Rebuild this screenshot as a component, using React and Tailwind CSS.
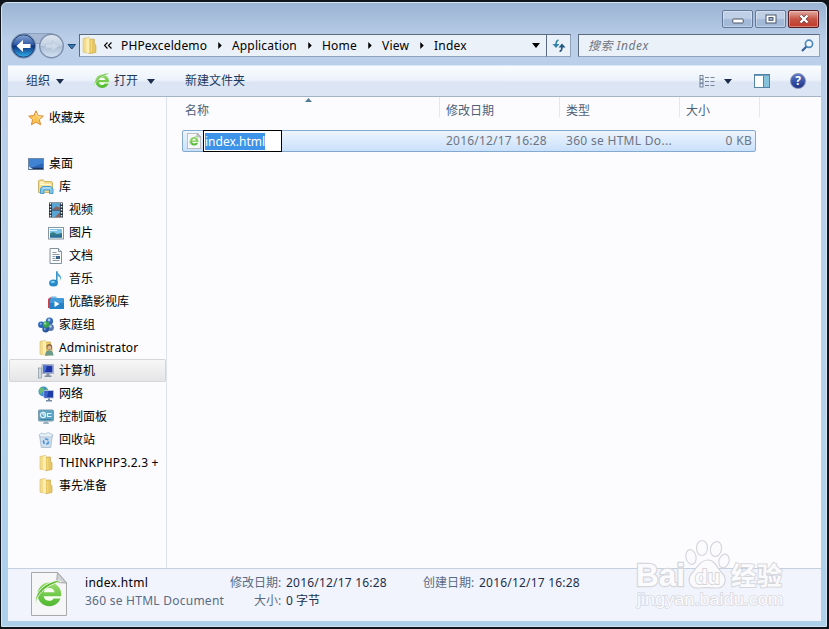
import { useId } from 'react'

const CRUMBS = [
  { name: 'PHPexceldemo', box: 'w-[111px]', track: 'tracking-[0.15px]' },
  { name: 'Application', box: 'w-[90px]', track: 'tracking-[0.15px]' },
  { name: 'Home', box: 'w-[60px]', track: 'tracking-[0.2px]' },
  { name: 'View', box: 'w-[52px]', track: 'tracking-[0.2px]' },
  { name: 'Index', box: 'w-[60px]', track: 'tracking-[0.2px]', last: true },
]

const TREE = [
  { name: '桌面', icon: DesktopIcon, pad: 'pl-[19px]' },
  { name: '库', icon: LibraryIcon, pad: 'pl-[29px]' },
  { name: '视频', icon: VideoIcon, pad: 'pl-[39px]' },
  { name: '图片', icon: PictureIcon, pad: 'pl-[39px]' },
  { name: '文档', icon: DocumentIcon, pad: 'pl-[39px]' },
  { name: '音乐', icon: MusicIcon, pad: 'pl-[39px]' },
  { name: '优酷影视库', icon: YoukuIcon, pad: 'pl-[39px]' },
  { name: '家庭组', icon: HomegroupIcon, pad: 'pl-[29px]' },
  { name: 'Administrator', icon: UserIcon, pad: 'pl-[29px]', track: 'tracking-[0.1px]' },
  { name: '计算机', icon: ComputerIcon, pad: 'pl-[29px]', active: true },
  { name: '网络', icon: NetworkIcon, pad: 'pl-[29px]' },
  { name: '控制面板', icon: ControlIcon, pad: 'pl-[29px]' },
  { name: '回收站', icon: RecycleIcon, pad: 'pl-[29px]' },
  { name: 'THINKPHP3.2.3 +', icon: FolderIcon, pad: 'pl-[29px]', track: 'tracking-[0.2px]' },
  { name: '事先准备', icon: FolderIcon, pad: 'pl-[29px]' },
]

function Icon({ children, className = 'h-4 w-4' }) {
  return <svg viewBox="0 0 16 16" className={`shrink-0 ${className}`}>{children}</svg>
}

function StarIcon() {
  return (
    <Icon>
      <path d="M8 .8l2.100 4.800 5.200.5-3.900 3.500 1.200 5.200L8 12.100l-4.600 2.700 1.200-5.200L.7 6.100l5.200-.5z" fill="#fbc552" stroke="#dc8a33" />
      <path d="M8 3l1.300 3.500 3.600.4-2.700 2.400M5 8.500l1.500-1.500" fill="none" stroke="#ffe9a6" />
    </Icon>
  )
}

function DesktopIcon() {
  return (
    <Icon>
      <rect x=".5" y="2.500" width="15" height="11" fill="#2c66b8" stroke="#6d87a5" />
      <path d="M1 3h14v4L5 11H1z" fill="#3f83d2" />
      <path d="M1 12.500h14" stroke="#1e3459" strokeWidth="1.500" />
      <path d="M1 10.500l4 2.500H1z" fill="#cfe9f5" />
    </Icon>
  )
}

function LibraryIcon() {
  return (
    <Icon>
      <path d="M.5 13.500V2l1-1h4l1 1.500h6.500l1.500 1v10z" fill="#f2dc8b" stroke="#cdb267" />
      <path d="M2 3.500h4M2 5.500h11" stroke="#fff7cf" strokeWidth="1.500" />
      <path d="M2.500 14.500v-5l2-2h8l2.500 2v5h-3.500v-3.500h-5.500v3.500z" fill="#80c5e8" stroke="#4a9cca" />
      <path d="M4.500 9h8" stroke="#c8ebfa" />
    </Icon>
  )
}

function VideoIcon() {
  return (
    <Icon>
      <rect x="1" y=".5" width="14" height="15" fill="#26323d" />
      <rect x="4" y="1" width="8" height="6.500" fill="#5ba5d5" />
      <rect x="4" y="8.500" width="8" height="6.500" fill="#5ba5d5" />
      <path d="M4 7.500l4-3 4 1v2zM7 15l5-5v5z" fill="#8d625b" />
      <path d="M2.500 1v14M13.500 1v14" stroke="#e5edf2" strokeWidth="1.500" strokeDasharray="1.500 1.500" />
    </Icon>
  )
}

function PictureIcon() {
  return (
    <Icon>
      <rect x=".5" y="2.500" width="15" height="11.500" fill="#fff" stroke="#8496a2" />
      <rect x="2" y="4" width="12" height="8.500" fill="#7bc4e8" />
      <path d="M2 8.500l3-1.500 4 2 5-1v4.500H2z" fill="#397d84" />
      <path d="M2 10.500l12-.5v2.500H2z" fill="#2a6d9a" />
      <path d="M2 5.500h7" stroke="#d8f1fa" />
    </Icon>
  )
}

function DocumentIcon() {
  return (
    <Icon>
      <path d="M2 .5h8.500l3 3v12H2z" fill="#fbfcfd" stroke="#82909b" />
      <path d="M10.500.5v3h3" fill="#dbe3e9" stroke="#82909b" />
      <path d="M4.500 4.500h4M4.500 6.500h7M4.500 8.500h3M4.500 10.500h3M4.500 12.500h7" stroke="#8e9ca7" />
      <rect x="8" y="8" width="4" height="3" fill="#39648c" />
    </Icon>
  )
}

function MusicIcon() {
  return (
    <Icon>
      <path d="M8.800 12V.3" fill="none" stroke="#3b93c4" strokeWidth="1.600" />
      <path d="M9 .3c.7 3 6.300 4.500 3.500 9.700.5-3-1-4.500-3.500-5z" fill="#4fa8d4" />
      <ellipse cx="5.500" cy="12" rx="4.400" ry="3.500" fill="#2489c8" />
      <ellipse cx="4.800" cy="11" rx="2.200" ry="1.200" fill="#7cc8eb" />
    </Icon>
  )
}

function YoukuIcon() {
  return (
    <Icon>
      <path d="M0 5l3-2v11H0z" fill="#c5444f" />
      <path d="M3 2.500h5l1 1.500h6.500v3H3z" fill="#6fb9e8" />
      <rect x="1.500" y="4.500" width="14.500" height="10.500" rx=".5" fill="#2482c9" />
      <path d="M2 5h13.500v4H2z" fill="#4299d9" />
      <path d="M6.500 7l5 3-5 3z" fill="#fff" />
    </Icon>
  )
}

function HomegroupIcon() {
  return (
    <Icon>
      <circle cx="11.500" cy="4.200" r="3.600" fill="#3568b8" />
      <circle cx="12.300" cy="10.500" r="3.600" fill="#5778ad" />
      <circle cx="3.300" cy="7.800" r="3.200" fill="#2b63c0" />
      <circle cx="7.700" cy="12" r="3.400" fill="#2c59a5" />
      <circle cx="8" cy="7.500" r="3.300" fill="#3ca051" />
      <circle cx="7.200" cy="6.500" r="1.300" fill="#8ed69a" />
      <circle cx="11" cy="3" r="1.400" fill="#a8cff2" />
      <circle cx="12.500" cy="9.500" r="1.200" fill="#b4cbe5" />
      <circle cx="2.700" cy="6.800" r="1" fill="#8fb9ee" />
      <circle cx="6.800" cy="12" r="1" fill="#83aadd" />
    </Icon>
  )
}

function FolderShape() {
  return (
    <>
      <path d="M2 1.500l5.500-1v14.500l-5.500-.8z" fill="#f3dd8a" stroke="#dcc06a" strokeWidth=".7" />
      <path d="M7.500 2h5v4.500l1.500 1v7l-6.500 1.200z" fill="#e6c763" stroke="#cfab4d" strokeWidth=".7" />
      <path d="M5 1.500l3-.8v14.600l-3-.6z" fill="#fbeeb0" />
      <path d="M9.800 3v11.500" stroke="#f4dc86" />
    </>
  )
}

function FolderIcon({ className }) {
  return <Icon className={className}><FolderShape /></Icon>
}

function UserIcon() {
  return (
    <Icon>
      <FolderShape />
      <circle cx="11.300" cy="7" r="2.900" fill="#8c6b4c" />
      <circle cx="11.300" cy="7.800" r="2" fill="#e0b98f" />
      <path d="M7 15.500c0-7 8.500-7 8.500 0z" fill="#6c9a8c" />
    </Icon>
  )
}

function ComputerIcon() {
  return (
    <Icon>
      <rect x=".5" y="5" width="3" height="10" fill="#d1d9df" stroke="#8a97a2" strokeWidth=".7" />
      <path d="M4 1.500h11.500v9H4z" fill="#dbe3ee" stroke="#94a2b7" strokeWidth=".8" />
      <path d="M5 2.500h9.500v7H5z" fill="#1c37a5" />
      <path d="M5 2.500h4l-2 7H5z" fill="#4b70d2" />
      <path d="M8.500 10.500h3v2h2v1.500h-7v-1.500h2z" fill="#8390a2" />
    </Icon>
  )
}

function NetworkIcon() {
  return (
    <Icon>
      <circle cx="5.500" cy="5.500" r="5" fill="#3e91cf" />
      <path d="M2 2.500c3-2 4-1 4 1s-3 3-2 5c-3-1-3.500-4-2-6zM8 2l2 2-2 2z" fill="#67bb70" />
      <path d="M6 4.500h9.500v7.500H6z" fill="#1e3da9" stroke="#b7c7da" strokeWidth=".9" />
      <path d="M6.500 5h4l-1.500 6.500H6.500z" fill="#3c62cc" />
      <path d="M10 12.500h2v1.500h2v1.500H8V14h2z" fill="#738aa4" />
    </Icon>
  )
}

function ControlIcon() {
  return (
    <Icon>
      <rect x=".5" y="1" width="15" height="11" rx="1" fill="#5ba5c6" stroke="#7c9cac" />
      <circle cx="5" cy="6" r="2.600" fill="none" stroke="#e1f4fb" strokeWidth="1.200" />
      <path d="M5 6V3.500M5 6h2.500M9.500 4.500h4M9.500 7.500h4M9.500 4v4" stroke="#e1f4fb" strokeWidth="1.100" />
      <path d="M6 12.500h4l1 2.500H5z" fill="#9db2bf" />
      <path d="M2.500 10.500h11" stroke="#3b7e9f" />
    </Icon>
  )
}

function RecycleIcon() {
  return (
    <Icon>
      <path d="M1.500 3l1.800 12.500h9.400l1.800-12.500z" fill="#cfdfee" stroke="#a4b8cb" strokeWidth=".8" />
      <path d="M.8 3.500l2.200-2.500 4 1 3-1.500 5.200 2.500-2.200 2H3z" fill="#e5eff7" stroke="#a4b8cb" strokeWidth=".7" />
      <circle cx="8" cy="9.500" r="2.500" fill="none" stroke="#4d91d6" strokeWidth="1.700" strokeDasharray="3.700 1.500" />
    </Icon>
  )
}

// Green browser "e" with the swoosh around it
function BrowserIcon({ className }) {
  const id = useId()
  return (
    <Icon className={className}>
      <defs>
        <linearGradient id={id} x1="0" y1="0" x2="0" y2="1">
          <stop offset="0" stopColor="#9bdc6c" />
          <stop offset="1" stopColor="#4db82f" />
        </linearGradient>
      </defs>
      <circle cx="8.200" cy="8.200" r="6.800" fill={`url(#${id})`} />
      <path d="M5 7c.3-1.500 1.400-2.400 3.100-2.400S11 5.500 11.200 7zM5 9.300h10v1.300h-4.300c-.6.900-1.400 1.300-2.500 1.300C6.400 11.900 5.200 11 5 9.300z" fill="#f7fff2" />
      <path d="M1.800 15.200C-1.500 11.500 4 3.500 15 .8c-1.500-.7-3-.5-4.500 0C3 3.300-.9 9.500.7 13.500c.2.600.6 1.200 1.100 1.700z" fill="#5fb936" stroke="#f4fdf0" strokeWidth=".5" />
    </Icon>
  )
}

function FileIcon({ className, e }) {
  return (
    <span className={`relative flex shrink-0 items-center justify-center ${className}`}>
      <svg viewBox="0 0 36 44" preserveAspectRatio="none" className="absolute inset-0 h-full w-full">
        <path d="M.5.5h26l9 10v33H.5z" fill="#f6f6f8" stroke="#a8a8ab" vectorEffect="non-scaling-stroke" />
        <path d="M26.500.5l-1 10 10 .5z" fill="#cfd0d4" stroke="#a8a8ab" vectorEffect="non-scaling-stroke" />
      </svg>
      <BrowserIcon className={`relative ${e}`} />
    </span>
  )
}

function Down({ className = 'text-[#1d2f4a]' }) {
  return (
    <svg viewBox="0 0 8 5" className={`h-[5px] w-2 shrink-0 ${className}`}>
      <path d="M0 0h8L4 5z" fill="currentColor" />
    </svg>
  )
}

function NavButtons() {
  return (
    <svg viewBox="0 0 70 28" className="h-7 w-[70px] shrink-0">
      <defs>
        <linearGradient id="back" x1="0" y1="0" x2="0" y2="1">
          <stop offset="0" stopColor="#8aa5d2" />
          <stop offset=".45" stopColor="#2c58a5" />
          <stop offset=".5" stopColor="#0b3180" />
          <stop offset="1" stopColor="#36b0ec" />
        </linearGradient>
        <linearGradient id="forward" x1="0" y1="0" x2="0" y2="1">
          <stop offset="0" stopColor="#dfe7f1" />
          <stop offset=".48" stopColor="#c3d0e0" />
          <stop offset=".52" stopColor="#aebfd5" />
          <stop offset="1" stopColor="#d5e3f3" />
        </linearGradient>
      </defs>
      <path d="M14 1.500h28v10H24z" fill="#a5b9d5" stroke="#8b9fbe" />
      <circle cx="13.500" cy="14" r="12.200" fill="#c3d3e9" stroke="#7187a9" />
      <circle cx="13.500" cy="14" r="11.200" fill="url(#back)" stroke="#1b3a74" />
      <circle cx="41.500" cy="14" r="11.800" fill="url(#forward)" stroke="#7c8fac" strokeWidth="1.400" />
      <path d="M6.500 14l6.500-6v4h7.500v4H13v4z" fill="#fff" />
      <path d="M48.500 14L42 8.500v3.500h-6.500v4H42v3.500z" fill="#cdd9e8" stroke="#b7c5d9" strokeWidth=".7" />
      <path d="M58 12.500h7.500l-3.700 4.500z" fill="#3a78b0" stroke="#1e4a78" />
    </svg>
  )
}

function CaptionButtons() {
  const base = 'flex h-[18px] items-center justify-center rounded-[2px] border shadow-[inset_0_0_0_1px_rgba(255,255,255,0.35)]'
  const pale = 'border-[#64799a] bg-linear-to-b from-[#bfcfe5] from-45% to-[#a3b9d8] to-55%'
  return (
    <div className="flex pt-[7px] pr-[7px]">
      <div className={`${base} ${pale} mr-[2px] w-[31px]`}>
        <svg viewBox="0 0 12 6" className="mt-[4px] h-[6px] w-3"><rect x=".8" y="1" width="10.400" height="4" rx=".5" fill="#fff" stroke="#4b566b" /></svg>
      </div>
      <div className={`${base} ${pale} mr-[2px] w-[31px]`}>
        <svg viewBox="0 0 12 10" className="h-[10px] w-3">
          <rect x="1" y="1" width="10" height="8" fill="#fff" stroke="#4b566b" />
          <rect x="4" y="3.500" width="4" height="2.800" fill="#9fb6d4" stroke="#4b566b" />
        </svg>
      </div>
      <div className={`${base} w-[31px] border-[#5b1b22] bg-linear-to-b from-[#dd9c92] from-10% via-[#c75445] via-50% to-[#bf3a29]`}>
        <svg viewBox="0 0 12 10" className="h-[10px] w-3">
          <path d="M2.500 1.500l7 7M9.500 1.500l-7 7" stroke="#5b3940" strokeWidth="3.800" />
          <path d="M2.500 1.500l7 7M9.500 1.500l-7 7" stroke="#fff" strokeWidth="2.400" />
        </svg>
      </div>
    </div>
  )
}

function AddressBar() {
  const box = 'flex h-[23px] items-center border border-[#8fa1bb] border-t-[#5b6a80] border-l-[#5b6a80] bg-[#ebf1f9]'
  return (
    <div className="flex h-[31px] items-start pl-[8px]">
      <div className="-mt-[2px]"><NavButtons /></div>
      <div className={`${box} -ml-[1px] w-[468px] pl-[1px] text-black`}>
        <FolderIcon className="h-[17px] w-[17px]" />
        <svg viewBox="0 0 8 7" className="mr-[9px] ml-[6px] h-[7px] w-2">
          <path d="M3.500.5l-3 3 3 3M7.500.5l-3 3 3 3" fill="none" stroke="#000" strokeWidth="1.200" />
        </svg>
        {CRUMBS.map((c) => (
          <div key={c.name} className={`flex shrink-0 items-center justify-between pr-[10px] ${c.box}`}>
            <span className={`whitespace-nowrap ${c.track}`}>{c.name}</span>
            {!c.last && <svg viewBox="0 0 4 8" className="h-[7px] w-1"><path d="M0 0v8l4-4z" /></svg>}
          </div>
        ))}
        <span className="ml-auto pr-[6px]"><Down className="h-1 text-black" /></span>
      </div>
      <div className={`${box} -ml-px w-[25px] justify-center`}>
        <svg viewBox="0 0 14 13" className="h-[13px] w-[14px]">
          <path d="M6.500 1C4.500 1.500 4 3 4 6" fill="none" stroke="#3483a8" strokeWidth="1.700" />
          <path d="M.5 5h7L4 9z" fill="#3483a8" />
          <path d="M7.500 12.500c2-.5 2.500-2 2.500-5" fill="none" stroke="#24577f" strokeWidth="1.700" />
          <path d="M6.500 8.500h7L10 4.500z" fill="#24577f" />
        </svg>
      </div>
      <div className={`${box} ml-[7px] w-[242px] justify-between pr-[5px] pl-[9px]`}>
        <span className="tracking-[0.5px] text-[#6e7681] italic">搜索 Index</span>
        <svg viewBox="0 0 13 13" className="h-[13px] w-[13px]">
          <path d="M6 7L1 12" stroke="#355f96" strokeWidth="2.200" />
          <circle cx="8" cy="4.800" r="3.600" fill="#f3f8fc" stroke="#4d8abb" strokeWidth="1.700" />
        </svg>
      </div>
    </div>
  )
}

function Toolbar() {
  return (
    <div className="flex h-8 shrink-0 items-center border-t border-b border-t-[#d9e8f5] border-b-[#a6b4c8] bg-linear-to-b from-[#fafdff] from-0% via-[#edf3fb] via-45% to-[#dce5f4] to-55% pl-[18px] text-[#1e395b]">
      <span className="mr-[6px]">组织</span>
      <Down />
      <BrowserIcon className="mr-[4px] ml-[30px] h-4 w-4" />
      <span className="mr-[9px]">打开</span>
      <Down />
      <span className="ml-[30px]">新建文件夹</span>
      <div className="ml-auto flex items-center pr-[15px]">
        <svg viewBox="0 0 16 13" className="h-[13px] w-4">
          {[0.5, 4.5, 8.5].map((y) => (
            <g key={y} fill="none" stroke="#75859b">
              <rect x="1" y={y} width="3" height="3.500" />
              <path d={`M6 ${y + 2}h4M11.500 ${y + 2}h4`} />
            </g>
          ))}
        </svg>
        <span className="ml-[9px] flex"><Down /></span>
        <svg viewBox="0 0 16 14" className="ml-[22px] h-[14px] w-4">
          <rect x=".5" y=".5" width="15" height="13" fill="#fff" stroke="#5384a5" />
          <path d="M1 1.500h14" stroke="#719dbc" />
          <rect x="10" y="2" width="5" height="11" fill="#85c3da" />
          <path d="M9.500 2v11" stroke="#5384a5" />
        </svg>
        <span className="ml-5 flex h-4 w-4 items-center justify-center rounded-full border border-[#8590b4] bg-linear-to-b from-[#5b78c8] to-[#1d3287] text-[12px] leading-none font-bold text-white">?</span>
      </div>
    </div>
  )
}

function TreeItem({ icon: Glyph, name, pad, active, track = '' }) {
  return (
    <li className={`flex h-[23px] items-center gap-[5px] whitespace-nowrap ${pad} ${active ? 'rounded-[2px] bg-linear-to-b from-[#f8f8f8] to-[#e4e4e6] shadow-[inset_0_0_0_1px_#d6d6d8]' : ''}`}>
      <Glyph />
      <span className={track}>{name}</span>
    </li>
  )
}

function Sidebar() {
  return (
    <ul className="w-[159px] shrink-0 border-r border-[#dce3ee] pt-[9px] pl-px text-black">
      <TreeItem icon={StarIcon} name="收藏夹" pad="pl-[19px]" />
      <li className="h-[23px]" />
      {TREE.map((item) => <TreeItem key={item.name} {...item} />)}
    </ul>
  )
}

function FileList() {
  const head = 'flex h-5 items-center border-r border-[#e2e8f0] pt-[8px]'
  return (
    <div className="flex-1 pl-[15px]">
      <div className="relative flex h-[22px] text-[#4c607a]">
        <div className={`${head} w-[258px] pl-[3px]`}>名称</div>
        <div className={`${head} w-[120px] pl-[6px]`}>修改日期</div>
        <div className={`${head} w-[120px] pl-[6px]`}>类型</div>
        <div className={`${head} w-[80px] pl-[6px]`}>大小</div>
        <svg viewBox="0 0 7 4" className="absolute top-[1px] left-[123px] h-1 w-[7px]"><path d="M0 4L3.500 0 7 4z" fill="#527b93" /></svg>
      </div>
      <div className="mt-[11px] flex h-[22px] w-[574px] items-center rounded-[2px] border border-[#84a9cf] bg-linear-to-b from-[#eef5fe] to-[#c9e0fb] text-[#6d7584]">
        <div className="flex w-[257px] items-center pl-[4px]">
          <FileIcon className="h-4 w-[14px]" e="h-[10px] w-[10px]" />
          <div className="ml-[2px] flex h-[22px] w-[79px] items-center border border-black bg-white pl-px">
            <span className="bg-[#3c93e8] leading-[17px] text-white">index.html</span>
          </div>
        </div>
        <span className="w-[120px] pl-[6px] tracking-[0.2px]">2016/12/17 16:28</span>
        <span className="w-[120px] pl-[6px] tracking-[0.3px]">360 se HTML Do...</span>
        <span className="flex-1 pr-[3px] text-right tracking-[0.3px]">0 KB</span>
      </div>
    </div>
  )
}

function Details() {
  return (
    <div className="flex h-[53px] shrink-0 border-t border-[#c3d0df] bg-[#f1f4fc] pt-[4px] pl-[23px] leading-[19px] text-[#5a6b84]">
      <FileIcon className="-mt-px h-[44px] w-[36px]" e="h-[28px] w-[28px]" />
      <div className="ml-[18px] w-[145px] whitespace-nowrap">
        <div className="tracking-[0.3px] text-black">index.html</div>
        <div className="-mt-px tracking-[0.25px]">360 se HTML Document</div>
      </div>
      <div className="w-[193px] whitespace-nowrap">
        <div className="flex"><span className="w-[56px]">修改日期:</span><span className="tracking-[0.2px] text-[#1e2f4d]">2016/12/17 16:28</span></div>
        <div className="-mt-px flex"><span className="w-[56px] pl-6">大小:</span><span className="text-[#1e2f4d]">0 字节</span></div>
      </div>
      <div className="flex whitespace-nowrap"><span className="w-[56px]">创建日期:</span><span className="tracking-[0.2px] text-[#1e2f4d]">2016/12/17 16:28</span></div>
    </div>
  )
}

function Watermark() {
  return (
    <svg viewBox="0 0 160 80" className="pointer-events-none absolute top-[536px] left-[630px] h-20 w-40" fill="#fbfbfe" stroke="#d6d7dc" strokeWidth="1.200">
      <ellipse cx="61" cy="21" rx="5" ry="7.500" transform="rotate(-12 61 21)" />
      <ellipse cx="72" cy="12" rx="5.500" ry="7.500" />
      <ellipse cx="86" cy="13" rx="5.500" ry="7.500" transform="rotate(12 86 13)" />
      <ellipse cx="94" cy="25" rx="5" ry="7" transform="rotate(18 94 25)" />
      <path d="M78 24c7 0 9 8 14 13 6 6 3 15-5 15-5 0-12-1-18 0-9 1-13-8-7-15 5-5 8-13 16-13z" />
      <g fontFamily="Liberation Sans, Noto Sans CJK SC, sans-serif" fontWeight="bold" paintOrder="stroke">
        <text x="6" y="50" fontSize="32" strokeWidth="2.500" textLength="49" lengthAdjust="spacingAndGlyphs">Bai</text>
        <text x="65" y="48" fontSize="21" strokeWidth="2" textLength="25" lengthAdjust="spacingAndGlyphs">du</text>
        <text x="101" y="49" fontSize="25" strokeWidth="2" textLength="51">经验</text>
        <text x="7" y="69" fontSize="16" strokeWidth="1.400" stroke="#d8d9df" textLength="146" lengthAdjust="spacingAndGlyphs" fontWeight="normal">jingyan.baidu.com</text>
      </g>
    </svg>
  )
}

export default function App() {
  return (
    <div className="relative h-[629px] w-[829px] overflow-hidden bg-[#10151b] pt-[2px] pr-[2px] pb-[2px] pl-px font-['Noto_Sans','Noto_Sans_CJK_SC',sans-serif] text-[12px] leading-4">
      <div className="flex h-full flex-col rounded-t-[6px] border border-[#d5e4f4] bg-linear-to-b from-[#9bb4d3] from-0% via-[#bbcfe9] via-6% to-[#add1eb] pr-[5px] pb-[5px] pl-[6px]">
        <div className="-mr-[5px] flex h-[31px] shrink-0 justify-end"><CaptionButtons /></div>
        <div className="-ml-[6px]"><AddressBar /></div>
        <Toolbar />
        <div className="flex min-h-0 flex-1 bg-[#fcfcfe]">
          <Sidebar />
          <FileList />
        </div>
        <Details />
      </div>
      <Watermark />
    </div>
  )
}
